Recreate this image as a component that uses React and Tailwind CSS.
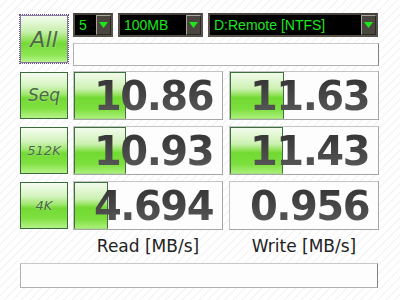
import React from 'react';

const greenBtn =
  'bg-[linear-gradient(to_bottom,#f6fcf2_0%,#d2f3bb_30%,#9fe76d_48%,#74d935_56%,#7fe040_78%,#b5f287_100%)] border border-[#3a6b3a]';

const greenBar =
  'bg-[linear-gradient(to_bottom,#f2fbec_0%,#cdf1b3_35%,#95e35f_48%,#72d932_55%,#7cdf3d_80%,#aaef78_100%)] border border-[#3e6f3e] border-b-[#9fdf7f]';

function Dropdown({ value, width }) {
  return (
    <div
      className={`${width} h-[24px] flex bg-black border-2 border-[#57524a] border-t-[#45413a]`}
    >
      <span className="flex-1 pl-[4px] text-[14px] leading-[20px] text-[#1ee61e] font-['Liberation_Sans',Arial,sans-serif] whitespace-nowrap overflow-hidden">
        {value}
      </span>
      <div className="w-[15px] h-full bg-[#4a463f] border border-t-[#a8a49a] border-l-[#a8a49a] border-r-[#2a2824] border-b-[#2a2824] flex items-center justify-center">
        <svg width="9" height="6" viewBox="0 0 9 6">
          <path d="M0 0 H9 L4.5 6 Z" fill="#1ee61e" />
        </svg>
      </div>
    </div>
  );
}

function LabelButton({ label, size }) {
  return (
    <div
      className={`w-[48px] h-[47px] self-center flex items-center justify-center ${greenBtn}`}
    >
      <span
        className={`${size} italic text-[#4a6a42] font-['DejaVu_Sans',sans-serif] [text-shadow:0_0_2px_#c8f0b0]`}
      >
        {label}
      </span>
    </div>
  );
}

function Result({ value, bar }) {
  return (
    <div className="relative w-[150px] h-[49px] bg-[#fdfdfd] border border-[#a6a6a6] border-t-[#c4c4c4] border-l-[#c4c4c4] flex items-center justify-end pr-[9px]">
      {bar > 0 && (
        <div
          className={`absolute left-0 top-0 bottom-0 ${greenBar}`}
          style={{ width: bar }}
        />
      )}
      <span className="relative text-[40px] leading-none font-bold tracking-[-1.5px] text-transparent bg-clip-text bg-[linear-gradient(to_bottom,#333333,#5a5a5a)] font-['DejaVu_Sans',Verdana,sans-serif]">
        {value}
      </span>
    </div>
  );
}

const rows = [
  { label: 'Seq', size: 'text-[17px]', read: '10.86', readBar: 52, write: '11.63', writeBar: 54 },
  { label: '512K', size: 'text-[13px]', read: '10.93', readBar: 52, write: '11.43', writeBar: 53 },
  { label: '4K', size: 'text-[13px]', read: '4.694', readBar: 34, write: '0.956', writeBar: 0 },
];

export default function App() {
  return (
    <div className="w-[400px] h-[300px] overflow-hidden bg-[repeating-linear-gradient(135deg,#ffffff_0px,#ffffff_4px,#f1f1f1_5px,#ffffff_6px)] pl-[20px] pt-[13px]">
      {/* Top controls */}
      <div className="flex gap-[5px]">
        <div className="mt-[2px] w-[48px] h-[48px] flex items-center justify-center bg-[linear-gradient(to_bottom,#f4fbf0_0%,#c6efa8_35%,#8fe257_52%,#74d935_60%,#8ee654_85%,#b8f38c_100%)] outline outline-1 outline-dotted outline-[#6a4f8a] border border-[#8a7aa0]">
          <span className="text-[22px] italic text-[#4a6a42] font-['DejaVu_Sans',sans-serif] [text-shadow:0_0_2px_#c8f0b0]">
            All
          </span>
        </div>
        <div className="w-[306px] flex flex-col gap-[6px]">
          <div className="flex gap-[5px]">
            <Dropdown value="5" width="w-[40px]" />
            <Dropdown value="100MB" width="w-[85px]" />
            <Dropdown value="D:Remote [NTFS]" width="w-[170px]" />
          </div>
          <div className="h-[23px] bg-[#fdfdfd] border border-[#b0b0b0] border-t-[#c8c8c8] border-r-[#808080]" />
        </div>
      </div>

      {/* Results */}
      <div className="mt-[5px] flex flex-col gap-[6px]">
        {rows.map((r) => (
          <div key={r.label} className="flex">
            <LabelButton label={r.label} size={r.size} />
            <div className="ml-[5px]">
              <Result value={r.read} bar={r.readBar} />
            </div>
            <div className="ml-[6px]">
              <Result value={r.write} bar={r.writeBar} />
            </div>
          </div>
        ))}
      </div>

      {/* Column captions */}
      <div className="flex h-[33px] items-center text-[17px] text-[#222] font-['DejaVu_Sans',Verdana,sans-serif]">
        <div className="w-[53px]" />
        <div className="w-[150px] text-center">Read [MB/s]</div>
        <div className="w-[6px]" />
        <div className="w-[150px] text-center">Write [MB/s]</div>
      </div>

      {/* Status bar */}
      <div className="w-[358px] h-[25px] bg-[#fdfdfd] border border-[#b0b0b0] border-t-[#c8c8c8] border-r-[#808080]" />
    </div>
  );
}
